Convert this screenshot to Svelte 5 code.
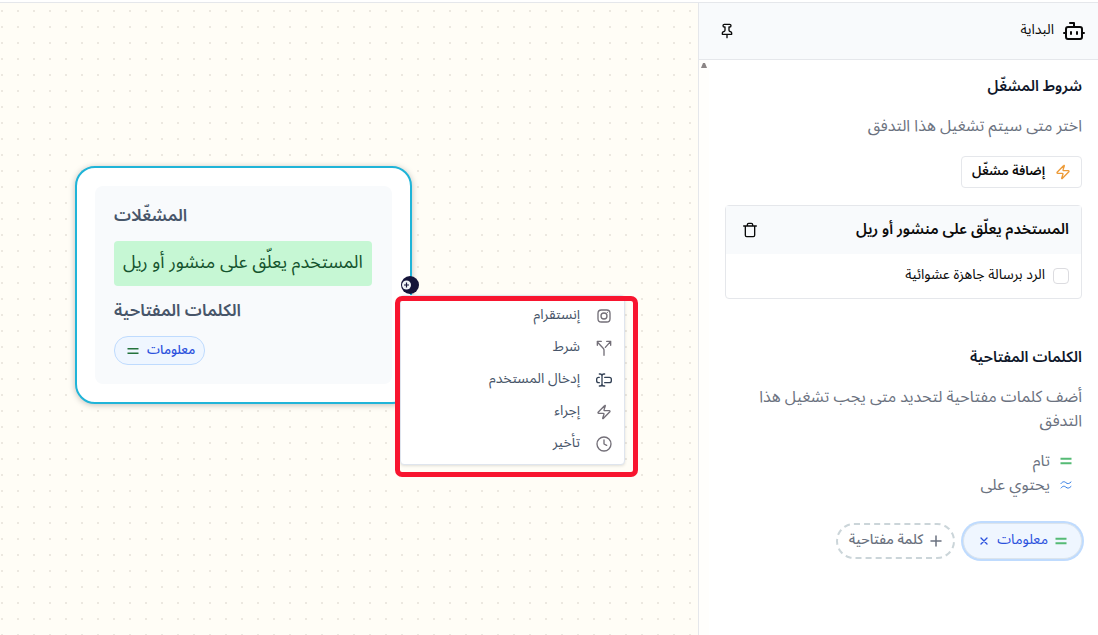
<script>
  const steps = [
    { icon: 'instagram', label: 'إنستقرام' },
    { icon: 'split', label: 'شرط' },
    { icon: 'input', label: 'إدخال المستخدم' },
    { icon: 'bolt', label: 'إجراء' },
    { icon: 'clock', label: 'تأخير' },
  ];

  let randomReply = $state(false);
</script>

{#snippet icon(name)}
  <svg class="icon {name}" viewBox="0 0 24 24" aria-hidden="true">
    {#if name === 'instagram'}
      <rect x="3" y="3" width="18" height="18" rx="5" />
      <circle cx="12" cy="12" r="4.5" />
      <path d="M17 6.5v.01" />
    {:else if name === 'split'}
      <path d="M12 23v-7.7a4 4 0 0 0-1.2-2.9L2 3M16 2h6v6M8 2H2v6M14 11l8-9" />
    {:else if name === 'input'}
      <path d="M5 3h1a3 3 0 0 1 3 3 3 3 0 0 1 3-3h1M13 21h-1a3 3 0 0 1-3-3 3 3 0 0 1-3 3H5M9 6v12M5 16H4a3 3 0 0 1-3-3v-2a3 3 0 0 1 3-3h1M13 8h7a3 3 0 0 1 3 3v2a3 3 0 0 1-3 3h-7" />
    {:else if name === 'bolt'}
      <path d="M4 14a1 1 0 0 1-.78-1.63l9.9-10.2a.5.5 0 0 1 .86.46l-1.92 6.02A1 1 0 0 0 13 10h7a1 1 0 0 1 .78 1.63l-9.9 10.2a.5.5 0 0 1-.86-.46l1.92-6.02A1 1 0 0 0 11 14z" />
    {:else if name === 'clock'}
      <circle cx="12" cy="12" r="10.5" />
      <path d="M12 6v6l4 2" />
    {:else if name === 'bot'}
      <path d="M12 8V4H8" />
      <rect x="4" y="8" width="16" height="12" rx="2" />
      <path d="M2 14h2M20 14h2M15 13v2M9 13v2" />
    {:else if name === 'pin'}
      <path d="M12 17v5M5 17h14v-1.76a2 2 0 0 0-1.11-1.79l-1.78-.9A2 2 0 0 1 15 10.76V6h1a2 2 0 0 0 0-4H8a2 2 0 0 0 0 4h1v4.76a2 2 0 0 1-1.11 1.79l-1.78.9A2 2 0 0 0 5 15.24z" />
    {:else if name === 'trash'}
      <path d="M2.5 6h19M5 6v14a2 2 0 0 0 2 2h10a2 2 0 0 0 2-2V6M8 6V4a2 2 0 0 1 2-2h4a2 2 0 0 1 2 2v2" />
    {:else if name === 'equal'}
      <path d="M1 7.5h22M1 16.5h22" />
    {:else if name === 'approx'}
      <path d="M2 9c4-5 7-4 10-1.500s6 2.500 10-1.500M2 18c4-5 7-4 10-1.500s6 2.500 10-1.500" />
    {:else if name === 'plus'}
      <path d="M2 12h20M12 2v20" />
    {:else if name === 'close'}
      <path d="M3 3l18 18M21 3L3 21" />
    {/if}
  </svg>
{/snippet}

<div class="app" dir="rtl">
  <aside class="panel">
    <header class="panel-head">
      <div class="title">
        {@render icon('bot')}
        <span>البداية</span>
      </div>
      <button class="plain" aria-label="تثبيت">{@render icon('pin')}</button>
    </header>

    <div class="panel-body">
      <div class="content">
        <section class="triggers">
          <h2>شروط المشغّل</h2>
          <p>اختر متى سيتم تشغيل هذا التدفق</p>
          <button class="add">
            {@render icon('bolt')}
            <span>إضافة مشغّل</span>
          </button>
          <div class="trigger">
            <div class="trigger-head">
              <h3>المستخدم يعلّق على منشور أو ريل</h3>
              <button class="plain" aria-label="حذف">{@render icon('trash')}</button>
            </div>
            <label class="option">
              <input type="checkbox" bind:checked={randomReply} />
              <span>الرد برسالة جاهزة عشوائية</span>
            </label>
          </div>
        </section>

        <section>
          <h2>الكلمات المفتاحية</h2>
          <p>أضف كلمات مفتاحية لتحديد متى يجب تشغيل هذا التدفق</p>
          <ul class="legend">
            <li>{@render icon('equal')}<span>تام</span></li>
            <li>{@render icon('approx')}<span>يحتوي على</span></li>
          </ul>
          <div class="keywords">
            <div class="keyword">
              {@render icon('equal')}
              <span>معلومات</span>
              <button class="plain" aria-label="إزالة">{@render icon('close')}</button>
            </div>
            <button class="new-keyword">
              {@render icon('plus')}
              <span>كلمة مفتاحية</span>
            </button>
          </div>
        </section>
      </div>
      <div class="track"><span class="arrow"></span></div>
    </div>
  </aside>

  <main class="canvas" dir="ltr">
    <div class="node">
      <div class="node-body">
        <h4>المشغّلات</h4>
        <div class="event">المستخدم يعلّق على منشور أو ريل</div>
        <h4>الكلمات المفتاحية</h4>
        <div class="tag">
          {@render icon('equal')}
          <span>معلومات</span>
        </div>
      </div>
    </div>

    <div class="menu" dir="rtl">
      {#each steps as step (step.icon)}
        <button class="step">
          {@render icon(step.icon)}
          <span>{step.label}</span>
        </button>
      {/each}
    </div>
    <div class="highlight"></div>
    <button class="handle" aria-label="إضافة خطوة">
      <svg viewBox="0 0 18 18" aria-hidden="true">
        <circle cx="9" cy="9" r="9" fill="#15153a" />
        <circle cx="5.5" cy="9" r="4.5" fill="#f1f5f9" />
        <path d="M3 9h5M5.5 6.5v5" stroke="#15153a" stroke-width="1.2" />
      </svg>
    </button>
  </main>
</div>

<style>
  :global(body) {
    margin: 0;
    background: #fff;
  }

  .app {
    display: flex;
    box-sizing: border-box;
    min-height: 100vh;
    padding-top: 2px;
    font-family: 'Noto Sans Arabic', 'Noto Sans', 'Open Sans', sans-serif;
    font-size: 14px;
    line-height: 24px;
    color: #0a0a0a;
  }

  h2,
  h3,
  h4,
  p,
  ul {
    margin: 0;
    padding: 0;
  }

  button {
    font: inherit;
    color: inherit;
    cursor: pointer;
  }

  .plain {
    display: flex;
    padding: 0;
    border: 0;
    background: none;
  }

  .icon {
    display: block;
    flex: none;
    width: 16px;
    height: 16px;
    fill: none;
    stroke: currentColor;
    stroke-width: 2;
    stroke-linecap: round;
    stroke-linejoin: round;
  }

  .panel {
    display: flex;
    flex-direction: column;
    flex: none;
    width: 399px;
    border-top: 1px solid #e5e7eb;
    border-left: 1px solid #e5e7eb;
    background: #fff;
  }

  .panel-head {
    display: flex;
    align-items: center;
    justify-content: space-between;
    height: 56px;
    padding: 0 12px 0 20px;
    border-bottom: 1px solid #e5e7eb;
    background: #f8fafc;
  }

  .title {
    display: flex;
    align-items: center;
    gap: 8px;
  }

  .title .icon {
    width: 24px;
    height: 24px;
  }

  .title span,
  .add span,
  .option span,
  .keyword span,
  .new-keyword span,
  .tag span,
  .step span,
  h3 {
    padding-bottom: 2px;
  }

  .panel-body {
    display: flex;
    flex: 1;
  }

  .content {
    flex: 1;
    padding: 14px 16px;
  }

  .track {
    width: 10px;
    background: #fffefc;
  }

  .arrow {
    display: block;
    width: 2px;
    margin: 3px 2px;
    border: 2px solid transparent;
    border-top: 0;
    border-bottom: 5px solid #8b8585;
  }

  .triggers {
    margin-bottom: 46px;
  }

  h2 {
    font-size: 15px;
    font-weight: 600;
    color: #0f172a;
  }

  p {
    margin-top: 16px;
    font-size: 16px;
    color: #6b7280;
  }

  .add {
    display: flex;
    align-items: center;
    gap: 10px;
    height: 32px;
    margin: 18px 0 17px;
    padding: 0 10px;
    border: 1px solid #e5e7eb;
    border-radius: 4px;
    background: #fff;
    font-size: 13px;
    font-weight: 600;
  }

  .add .icon {
    color: #ed9a36;
  }

  .trigger {
    border: 1px solid #e5e7eb;
    border-radius: 4px;
  }

  .trigger-head {
    display: flex;
    align-items: center;
    justify-content: space-between;
    height: 48px;
    padding: 0 12px 0 16px;
    background: #f8fafc;
  }

  h3 {
    font-size: 15px;
    font-weight: 600;
  }

  .option {
    display: flex;
    align-items: center;
    gap: 8px;
    height: 44px;
    padding: 0 12px;
  }

  input {
    appearance: none;
    box-sizing: border-box;
    width: 16px;
    height: 16px;
    margin: 0;
    border: 1px solid #dcdce0;
    border-radius: 4px;
    background: #fff;
  }

  input:checked {
    background: #2563eb;
  }

  .legend {
    margin-top: 16px;
    padding-right: 10px;
    font-size: 16px;
    color: #6b7280;
    list-style: none;
  }

  .legend li {
    display: flex;
    align-items: center;
    gap: 10px;
  }

  .legend .icon {
    width: 12px;
    height: 12px;
  }

  .equal {
    color: #55bb75;
    stroke-width: 4;
    stroke-linecap: butt;
  }

  .approx {
    color: #2f7be5;
  }

  .keywords {
    display: flex;
    align-items: center;
    gap: 8px;
    margin-top: 26px;
  }

  .keyword {
    display: flex;
    align-items: center;
    gap: 7px;
    height: 34px;
    padding: 0 14px;
    border: 1px solid #dbe4ec;
    border-radius: 20px;
    background: #eff6ff;
    box-shadow: 0 0 0 2px #bfdbfe;
    color: #2a51dd;
  }

  .keyword .icon {
    width: 12px;
    height: 12px;
  }

  .keyword .close {
    width: 8px;
    height: 8px;
    margin: 0 2px;
    stroke-width: 4;
  }

  .new-keyword {
    display: flex;
    align-items: center;
    gap: 7px;
    height: 36px;
    padding: 0 11px;
    border: 2px dashed #cbd5d9;
    border-radius: 20px;
    background: #fff;
    color: #6b7280;
    font-weight: 500;
  }

  .new-keyword .icon {
    width: 12px;
    height: 12px;
    stroke-width: 3;
  }

  .canvas {
    position: relative;
    flex: 1;
    border-top: 1px solid #e5e7eb;
    background: #fffdf6 conic-gradient(from 270deg at 2px 2px, #ece8e0 25%, transparent 0) 1px 7px / 16px 16px;
  }

  .node {
    position: absolute;
    left: 75px;
    top: 163px;
    padding: 18px;
    border: 2px solid #1fb4d8;
    border-radius: 20px;
    background: #fff;
    box-shadow: 0 1px 6px rgba(0, 0, 0, 0.25);
  }

  .node-body {
    padding: 18px 20px 19px 19px;
    border-radius: 8px;
    background: #f8fafc;
  }

  h4 {
    font-size: 17px;
    font-weight: 600;
    color: #475569;
  }

  .event {
    margin: 13px 0;
    padding: 9px 9px 11px;
    border-radius: 4px;
    background: #c6f7d4;
    color: #14532d;
    font-size: 18px;
    line-height: 25px;
  }

  .tag {
    display: flex;
    align-items: center;
    gap: 8px;
    width: fit-content;
    height: 27px;
    margin-top: 13px;
    padding: 0 9px 0 12px;
    border: 1px solid #bfdbfe;
    border-radius: 14px;
    background: #eff6ff;
    color: #2a51dd;
    font-size: 13px;
    font-weight: 500;
  }

  .tag .icon {
    width: 12px;
    height: 12px;
    color: #23733c;
    stroke-width: 3;
  }

  .menu {
    position: absolute;
    left: 400px;
    top: 292px;
    box-sizing: border-box;
    width: 225px;
    padding: 4px 0;
    border: 1px solid #dfe5ee;
    border-radius: 4px;
    background: #fff;
    box-shadow: 0 1px 3px rgba(0, 0, 0, 0.12);
  }

  .step {
    display: flex;
    align-items: center;
    gap: 16px;
    width: 100%;
    height: 32px;
    padding: 0 12px;
    border: 0;
    background: none;
    color: #475569;
  }

  .step .icon {
    color: #736f78;
  }

  .step .input {
    color: #334155;
  }

  .highlight {
    position: absolute;
    left: 395px;
    top: 293px;
    width: 233px;
    height: 171px;
    border: 5px solid #f8152f;
    border-radius: 7px;
    pointer-events: none;
  }

  .handle {
    position: absolute;
    left: 401px;
    top: 273px;
    padding: 0;
    border: 0;
    background: none;
  }

  .handle svg {
    display: block;
    width: 18px;
    height: 18px;
    fill: none;
  }
</style>
